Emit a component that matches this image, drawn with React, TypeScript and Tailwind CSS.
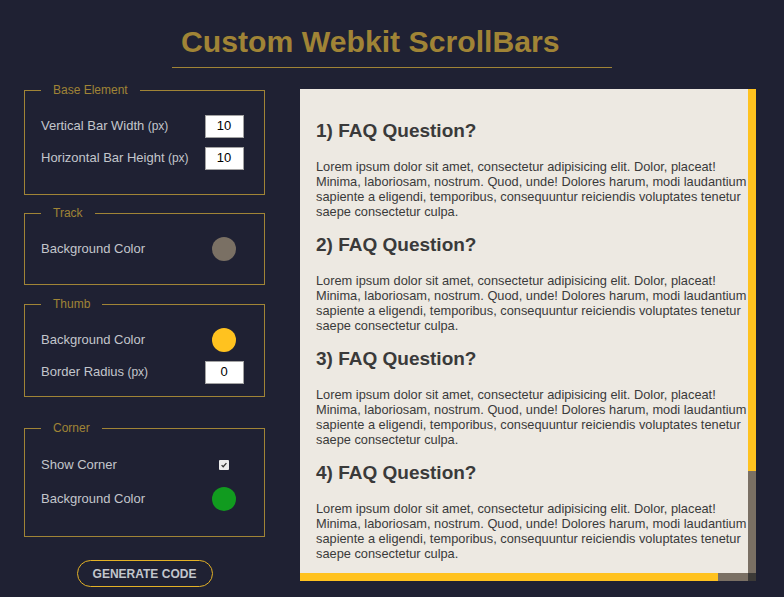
import type { ReactNode } from 'react';

const faqs = [1, 2, 3, 4, 5];

const lorem =
  'Lorem ipsum dolor sit amet, consectetur adipisicing elit. Dolor, placeat! Minima, laboriosam, nostrum. Quod, unde! Dolores harum, modi laudantium sapiente a eligendi, temporibus, consequuntur reiciendis voluptates tenetur saepe consectetur culpa.';

function Group({ title, className, children }: { title: string; className?: string; children: ReactNode }) {
  return (
    <fieldset className={`w-[241px] border border-[#a08436] pl-4 pr-4 ${className ?? ''}`}>
      <legend className="ml-0 px-3 text-[12px] leading-[14px] text-[#a08436]">{title}</legend>
      <div className="flex flex-col">{children}</div>
    </fieldset>
  );
}

function Row({ label, unit, children, className }: { label: string; unit?: string; children: ReactNode; className?: string }) {
  return (
    <div className={`flex h-6 items-center justify-between ${className ?? ''}`}>
      <span className="text-[13px] text-[#c3c6cc]">
        {label}
        {unit && <span className="text-[12px]"> {unit}</span>}
      </span>
      <div className="flex w-[48px] justify-center">{children}</div>
    </div>
  );
}

function NumBox({ value }: { value: string }) {
  return (
    <div className="flex h-[23px] w-[39px] items-center justify-center border border-[#a3a3a3] bg-white text-[13px] text-black">
      {value}
    </div>
  );
}

function Dot({ color }: { color: string }) {
  return <div className={`h-6 w-6 rounded-full ${color}`} />;
}

export default function App() {
  return (
    <div className="min-h-[597px] bg-[#1f2133] font-['Liberation_Sans',Arial,sans-serif]">
      {/* Header */}
      <div className="pt-[24px]">
        <h1 className="mx-auto w-[440px] border-b border-[#a08436] pb-[8px] pl-[9px] text-[30.2px] font-bold leading-[35px] text-[#a08436]">
          Custom Webkit ScrollBars
        </h1>
      </div>

      <div className="flex items-start pl-6">
        {/* Controls */}
        <div className="flex w-[241px] flex-col pt-[15px]">
          <Group title="Base Element" className="pt-[17px] pb-6">
            <Row label="Vertical Bar Width" unit="(px)">
              <NumBox value="10" />
            </Row>
            <Row label="Horizontal Bar Height" unit="(px)" className="mt-[8px]">
              <NumBox value="10" />
            </Row>
          </Group>

          <Group title="Track" className="mt-[11px] pt-[17px] pb-[23px]">
            <Row label="Background Color">
              <Dot color="bg-[#7a7064]" />
            </Row>
          </Group>

          <Group title="Thumb" className="mt-[12px] pt-[17px] pb-[12px]">
            <Row label="Background Color">
              <Dot color="bg-[#ffc21f]" />
            </Row>
            <Row label="Border Radius" unit="(px)" className="mt-[8px]">
              <NumBox value="0" />
            </Row>
          </Group>

          <Group title="Corner" className="mt-[24px] pt-[18px] pb-[25px]">
            <Row label="Show Corner">
              <span className="flex h-[10px] w-[10px] items-center justify-center rounded-[1px] bg-[#ececec]">
                <svg viewBox="0 0 10 10" className="h-[8px] w-[8px]">
                  <path d="M2 5.2 L4 7.2 L8 2.6" fill="none" stroke="#333" strokeWidth={1.6} />
                </svg>
              </span>
            </Row>
            <Row label="Background Color" className="mt-[10px]">
              <Dot color="bg-[#119b1f]" />
            </Row>
          </Group>

          <button className="mx-auto mt-[23px] h-[27px] w-[136px] rounded-full border border-[#e3b126] text-[12px] font-bold text-[#c3c6cc]">
            GENERATE CODE
          </button>
        </div>

        {/* Preview with drawn scrollbars */}
        <div className="ml-[35px] mt-[21px] flex h-[492px] w-[456px] flex-col">
          <div className="flex min-h-0 flex-1">
            <div className="flex-1 overflow-hidden bg-[#ede9e2] pl-4 pt-[16px] text-[#3a3a3a]">
              {faqs.map(n => (
                <div key={n} className="w-[436px]">
                  <h2 className="mb-[17px] mt-[15px] text-[19px] font-bold leading-[22px]">{n}) FAQ Question?</h2>
                  <p className="text-[12.8px] leading-[15px]">{lorem}</p>
                </div>
              ))}
            </div>
            <div className="flex w-[8px] flex-col">
              <div className="h-[382px] bg-[#ffc21f]" />
              <div className="flex-1 bg-[#7a7064]" />
            </div>
          </div>
          <div className="flex h-[8px]">
            <div className="w-[418px] bg-[#ffc21f]" />
            <div className="flex-1 bg-[#7a7064]" />
            <div className="w-[8px] bg-[#3c3a37]" />
          </div>
        </div>
      </div>
    </div>
  );
}
